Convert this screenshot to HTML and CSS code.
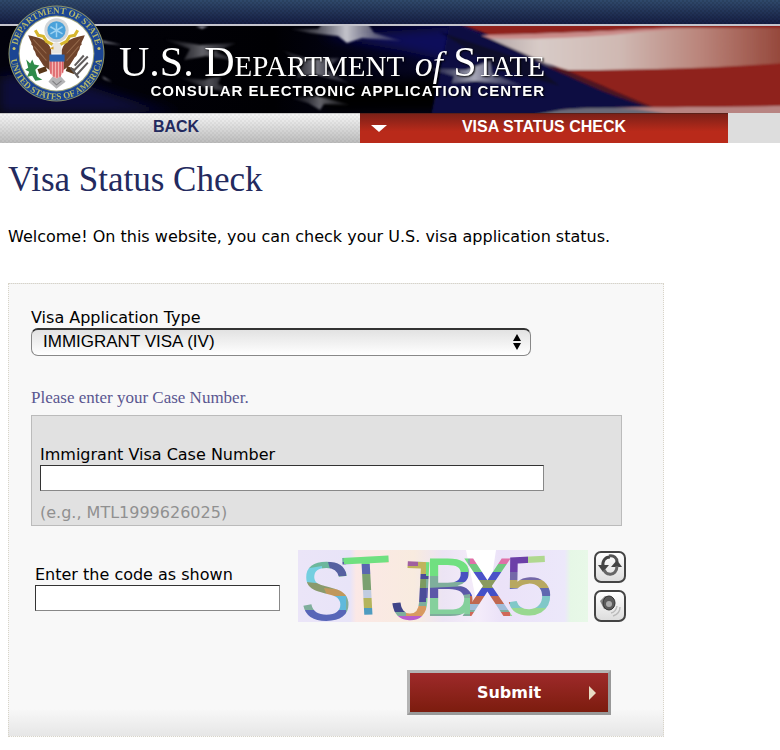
FILE: index.html
```html
<!DOCTYPE html>
<html lang="en">
<head>
  <meta charset="utf-8">
  <title>Visa Status Check</title>
  <link rel="stylesheet" href="styles.css">
</head>
<body>
  <header class="site-header">
    <div class="topbar"></div>
    <div class="banner">
      <svg class="flag" viewBox="0 0 780 87" preserveAspectRatio="xMinYMin slice" aria-hidden="true">
        <defs>
          <linearGradient id="field" x1="0" x2="1">
            <stop offset="0" stop-color="#02020c"/>
            <stop offset=".35" stop-color="#000003"/>
            <stop offset=".6" stop-color="#06062c"/>
            <stop offset="1" stop-color="#0a0d4c"/>
          </linearGradient>
          <linearGradient id="whiteStripe" x1="0" x2="1">
            <stop offset="0" stop-color="#a79a9c"/>
            <stop offset=".2" stop-color="#d8cbc7"/>
            <stop offset=".45" stop-color="#cfb8b2"/>
            <stop offset=".7" stop-color="#b98379"/>
            <stop offset="1" stop-color="#8d3a2d"/>
          </linearGradient>
          <linearGradient id="star" x1="0" x2="1">
            <stop offset="0" stop-color="#55555f" stop-opacity=".2"/>
            <stop offset=".5" stop-color="#c4c4cc"/>
            <stop offset="1" stop-color="#66667a" stop-opacity=".3"/>
          </linearGradient>
          <filter id="soft"><feGaussianBlur stdDeviation="1"/></filter>
          <filter id="softer"><feGaussianBlur stdDeviation="6"/></filter>
        </defs>
        <rect width="780" height="87" fill="url(#field)"/>
        <g filter="url(#softer)">
          <path d="M0 50C60 40 120 75 180 87H0z" fill="#08083a"/>
          <path d="M320 10L470 0L560 60L520 50L400 24z" fill="#10105a"/>
          <path d="M300 60L440 50L500 87H330z" fill="#000"/>
        </g>
        <g filter="url(#soft)">
          <path d="M456 -4H800V95H655C610 68 560 44 520 22C496 10 470 3 456 -4z" fill="#8f211b"/>
          <path d="M474 9C560 9 620 3 690 2H800V36C720 42 650 44 568 44C540 36 500 24 474 9z" fill="url(#whiteStripe)"/>
          <path d="M474 9C560 9 620 3 690 2L640 6C590 12 530 14 480 12z" fill="#c98a88"/>
          <path d="M474 8C505 18 530 30 556 42L540 48L500 34z" fill="#5d5268"/>
          <path d="M450 -4C490 12 520 26 546 40C590 58 620 72 658 84L600 95H430z" fill="#0a0c42"/>
          <path d="M440 6L530 36L560 60L500 44z" fill="#07072a"/>
          <path d="M546 40L566 44C600 58 630 72 658 83C620 74 590 60 546 40z" fill="#4d1420"/>
          <path d="M560 84C640 79 700 83 800 79V95H560z" fill="#b88482"/>
          <path d="M500 95L560 84C600 80 650 80 690 95z" fill="#6a6a78"/>
          <path d="M290 3L318 3L322 -2H368L374 7L402 15L362 12L347 17L338 10L310 7z" fill="url(#star)"/>
          <path d="M163 13L200 19L236 17L216 26L242 36L206 30L184 34L190 23z" fill="url(#star)" opacity=".5"/>
          <path d="M178 51L204 54L222 48L218 58L240 68L206 62z" fill="url(#star)" opacity=".4"/>
          <path d="M282 24L308 33L340 32L326 43L350 58L314 48L296 52L302 39z" fill="url(#star)" opacity=".6"/>
          <path d="M290 72L318 70L350 79L324 78L320 84L308 77z" fill="url(#star)" opacity=".5"/>
          <path d="M424 42L466 44L490 35L492 48L524 60L476 55L452 57L454 50z" fill="url(#star)" opacity=".85"/>
          <path d="M102 50L112 56L104 53z M100 14L122 19L104 17z M196 0h12l-6 3z" fill="#8a8a96"/>
        </g>
      </svg>
      <svg class="seal" viewBox="0 0 96 96" role="img" aria-label="Seal of the Department of State">
        <defs>
          <path id="ringTop" d="M8.500 48A39.500 39.500 0 0 1 87.500 48"/>
          <path id="ringBottom" d="M2.500 48A45.500 45.500 0 0 0 93.500 48"/>
        </defs>
        <circle cx="48" cy="48" r="47.500" fill="#8d9468"/>
        <circle cx="48" cy="48" r="46.500" fill="#1b4593"/>
        <circle cx="48" cy="48" r="37.500" fill="#9da37c"/>
        <circle cx="48" cy="48" r="36.500" fill="#fff"/>
        <text class="seal-text"><textPath href="#ringTop" startOffset="50%" text-anchor="middle">DEPARTMENT OF STATE</textPath></text>
        <text class="seal-text"><textPath href="#ringBottom" startOffset="50%" text-anchor="middle">UNITED STATES OF AMERICA</textPath></text>
        <circle cx="6" cy="43" r="1.500" fill="#c9c26a"/>
        <circle cx="90" cy="43" r="1.500" fill="#c9c26a"/>
        <circle cx="48" cy="25" r="12" fill="#d3d6d8"/>
        <circle cx="48" cy="25" r="9" fill="#4aa1da"/>
        <path d="M48 18v14M42 21.500l12 7M54 21.500l-12 7" stroke="#9cd2f2" stroke-width="1.500"/>
        <path d="M43 45C40 34 30 32 20 30C22 36 24 37 23 39C26 41 24 43 26 45C28 48 27 50 30 52L35 60L42 65z" fill="#6f432b"/>
        <path d="M53 45C56 34 66 32 76 30C74 36 72 37 73 39C70 41 72 43 70 45C68 48 69 50 66 52L61 60L54 65z" fill="#6f432b"/>
        <path d="M25 34L38 48M26 41L38 55M71 34L58 48M70 41L58 55" stroke="#94694b" stroke-width="1" fill="none"/>
        <path d="M27 25l3 5 5 1 3 5 6 3 3 4M69 25l-3 5-5 1-3 5-6 3-3 4" stroke="#d6b62e" stroke-width="3" fill="none"/>
        <path d="M43 48C42 39 45 36 49 37C54 38 53 43 53 48z" fill="#e9e6df"/>
        <path d="M45 41l-4 2 4 1z" fill="#d6a52e"/>
        <path d="M38 63l-8 3M58 63l8 3" stroke="#583719" stroke-width="5"/>
        <path d="M48 66l-8 10 8 7 9-7z" fill="#b4b4b6"/>
        <path d="M44 75l4 4 5-4" stroke="#7d7d80" fill="none"/>
        <path d="M41 55h14v10q-2 6-7 8q-5-2-7-8z" fill="#f4b6b4"/>
        <path d="M42.500 55v13M45.500 55v16M48.500 55v17M51.500 55v16M54 55v12" stroke="#da5c62" stroke-width="1.500"/>
        <path d="M41 49h15v7H41z" fill="#285fae"/>
        <path d="M18 54l4 4 2-4 2 5 5 1-4 4 2 7 5 3-7 1-3-5-5 1 2-5-4-2 3-2z" fill="#2f8b4a"/>
        <path d="M79 51L64 66M75 50L66 60M79 57L68 69M62 62l8 10" stroke="#605c5c" stroke-width="2"/>
      </svg>
      <div class="brand">
        <div class="brand-name">U.S. Department <i>of</i> State</div>
        <div class="brand-sub">CONSULAR ELECTRONIC APPLICATION CENTER</div>
      </div>
    </div>
    <nav class="nav">
      <a class="nav-back" href="#">BACK</a>
      <a class="nav-current" href="#">VISA STATUS CHECK</a>
    </nav>
  </header>

  <main class="content">
    <h1>Visa Status Check</h1>
    <p class="intro">Welcome! On this website, you can check your U.S. visa application status.</p>

    <form class="panel">
      <label for="visaType">Visa Application Type</label>
      <div class="select-wrap">
        <select id="visaType">
          <option>IMMIGRANT VISA (IV)</option>
        </select>
        <svg class="select-arrows" viewBox="0 0 8 16" aria-hidden="true">
          <path d="M4 0l4 7H0zM4 16l4-7H0z"/>
        </svg>
      </div>

      <p class="prompt">Please enter your Case Number.</p>
      <div class="case-box">
        <label for="caseNumber">Immigrant Visa Case Number</label>
        <input type="text" id="caseNumber">
        <span class="hint">(e.g., MTL1999626025)</span>
      </div>

      <div class="code-row">
        <div class="code-field">
          <label for="code">Enter the code as shown</label>
          <input type="text" id="code">
        </div>
        <svg class="code-image" viewBox="0 0 290 72" role="img" aria-label="Code">
          <defs>
            <linearGradient id="paper">
              <stop offset="0" stop-color="#ebe5f8"/>
              <stop offset=".18" stop-color="#e8e4f8"/>
              <stop offset=".2" stop-color="#fbe8e6"/>
              <stop offset=".4" stop-color="#f8ebdf"/>
              <stop offset=".5" stop-color="#ece4f4"/>
              <stop offset=".62" stop-color="#f4ecfa"/>
              <stop offset=".7" stop-color="#ebe2f8"/>
              <stop offset=".92" stop-color="#ece8fa"/>
              <stop offset=".94" stop-color="#e6f7e6"/>
              <stop offset="1" stop-color="#e8f8e8"/>
            </linearGradient>
            <pattern id="ink" width="290" height="80" patternUnits="userSpaceOnUse">
              <rect width="290" height="80" fill="#7fae9c"/>
              <!-- S -->
              <path d="M0 0h48v18L0 26z" fill="#6cb79c"/>
              <path d="M30 12h18v14H34z" fill="#5560a0"/>
              <path d="M0 20l24-4v18H0z" fill="#74cfe0"/>
              <path d="M8 32l40 4v12L8 40z" fill="#8a9a6c"/>
              <path d="M26 38l22 2v8H30z" fill="#c0985c"/>
              <path d="M36 46h12v16H30z" fill="#5fb9dc"/>
              <path d="M0 60h48v20H0z" fill="#5866b8"/>
              <!-- T -->
              <path d="M46 0h46v14H46z" fill="#70e080"/>
              <path d="M60 14h20v10H60z" fill="#5a66b0"/>
              <path d="M60 24h20v16H60z" fill="#7aa070"/>
              <path d="M60 40h20v8H60z" fill="#c0cce0"/>
              <path d="M60 48h20v10H60z" fill="#b4b45c"/>
              <path d="M60 58h20v14H60z" fill="#4f9cc0"/>
              <!-- J and B -->
              <path d="M88 12h52v12H88z" fill="#c0b45c"/>
              <path d="M100 10h20v6h-20z" fill="#a060a0"/>
              <path d="M88 28h40v10H88z" fill="#7c9a60"/>
              <path d="M112 24h20v5h-20zM116 38h20v14h-20z" fill="#4c4c98"/>
              <path d="M88 50h20v12H88z" fill="#404488"/>
              <path d="M108 56h24v10h-24z" fill="#d89a60"/>
              <path d="M88 66h80v14H88z" fill="#b85ccc"/>
              <path d="M128 8h42v18h-42z" fill="#70e080"/>
              <path d="M156 22h14v10h-14z" fill="#4852c0"/>
              <path d="M128 38l44-2v8l-44 6z" fill="#5c58a8"/>
              <path d="M128 48h44v16h-44z" fill="#84d09c"/>
              <!-- X -->
              <path d="M172 6h40v10h-40z" fill="#e070a8"/>
              <path d="M172 14h40v8h-40z" fill="#70c880"/>
              <path d="M172 22h40v8h-40z" fill="#4a52c8"/>
              <path d="M172 30h40v8h-40z" fill="#8a9a60"/>
              <path d="M172 38h40v8h-40z" fill="#4450c8"/>
              <path d="M172 46h40v8h-40z" fill="#c06850"/>
              <path d="M172 54h40v6h-40z" fill="#a0bcd8"/>
              <path d="M172 62h40v8h-40z" fill="#d06858"/>
              <!-- 5 -->
              <path d="M212 0h22v22h-22z" fill="#6c3fa8"/>
              <path d="M230 0h30v20h-30z" fill="#b0d890"/>
              <path d="M212 22h48v8h-48z" fill="#7468a8"/>
              <path d="M212 30h48v8h-48z" fill="#b8a860"/>
              <path d="M212 38h48v8h-48z" fill="#6068b0"/>
              <path d="M212 46h48v12h-48z" fill="#80c8c8"/>
              <path d="M212 58h48v14h-48z" fill="#98d890"/>
            </pattern>
          </defs>
          <rect width="290" height="72" fill="url(#paper)"/>
          <path d="M168 0h30l-6 40-14 10z" fill="#fff"/>
          <text class="code-glyphs" x="2 44 86 125 163 206" y="70 66 68 66 66 66" rotate="0 -3 3 0 0 -3">STJBX5</text>
        </svg>
        <div class="code-buttons">
          <button type="button" aria-label="New code">
            <svg viewBox="0 0 28 28" aria-hidden="true">
              <path d="M7 14C6 8 9 4 14 4" stroke="#444" stroke-width="3" fill="none"/>
              <path d="M2 12H13L7 19z" fill="#444"/>
              <path d="M13 3C18 2 21 5 21 9" stroke="#555" stroke-width="3" fill="none"/>
              <path d="M15 14H26L21 7z" fill="#444"/>
              <path d="M21 13C21 18 18 22 13 21C10 21 9 19 8 17" stroke="#666" stroke-width="3" fill="none"/>
            </svg>
          </button>
          <button type="button" aria-label="Play code">
            <svg viewBox="0 0 28 28" aria-hidden="true">
              <path d="M4 9L9 4L16 5L19 13L15 18L8 17z" fill="#888"/>
              <ellipse cx="13" cy="11" rx="6" ry="7" fill="#5a5a5a" stroke="#333"/>
              <circle cx="13" cy="12" r="3" fill="#aaa"/>
              <path d="M15 21q5-1 6-7M17 24q7-2 7-9" stroke="#bbb" stroke-width="1.500" fill="none"/>
            </svg>
          </button>
        </div>
      </div>

      <button type="submit" class="submit">Submit</button>
    </form>
  </main>
</body>
</html>
```
FILE: styles.css
```css
body {
  margin: 0;
  font-family: Verdana, "DejaVu Sans", sans-serif;
  font-size: 16px;
  line-height: 20px;
  color: #000;
  background: #fff;
}

.topbar {
  height: 24px;
  border-bottom: 2px solid #c4c4cc;
  background:
    conic-gradient(rgba(0, 0, 0, 0.1) 25%, transparent 0 50%, rgba(0, 0, 0, 0.1) 0 75%, transparent 0) 0 0 / 4px 4px,
    linear-gradient(#304a6c, #151e44);
}

.banner {
  position: relative;
  height: 87px;
  background: #8c1f1a;
}

.flag {
  position: absolute;
  top: 0;
  left: 0;
  width: 100%;
  height: 100%;
}

/* the seal hangs over the top bar */
.seal {
  position: absolute;
  top: -21px;
  left: 8px;
  width: 97px;
  height: 97px;
}

.seal-text {
  font-family: "Liberation Serif", "Times New Roman", serif;
  font-size: 9px;
  font-weight: bold;
  fill: #b4b768;
}

.brand {
  position: relative;
  display: inline-block;
  padding: 16px 0 0 119px;
  color: #fff;
  text-align: right;
  text-shadow: 1px 1px 2px #000;
}

.brand-name {
  font-family: "Liberation Serif", "Times New Roman", serif;
  font-size: 42px;
  font-variant: small-caps;
  line-height: 40px;
}

.brand-name i {
  font-size: 36px;
  font-variant: normal;
  line-height: 30px;
}

.brand-sub {
  font-family: "Liberation Sans", Arial, sans-serif;
  font-size: 15px;
  font-weight: bold;
  letter-spacing: 1px;
  line-height: 18px;
}

.nav {
  display: grid;
  grid-template-columns: 360fr 368fr 52fr;
  background: #ddd;
}

.nav a {
  height: 29px;
  font-family: "Liberation Sans", Arial, sans-serif;
  font-weight: bold;
  line-height: 25px;
  text-align: center;
  text-decoration: none;
}

.nav-back {
  padding-right: 8px;
  border-top: 1px solid #c8c8c8;
  color: #232a5e;
  background:
    conic-gradient(rgba(0, 0, 0, 0.04) 25%, transparent 0 50%, rgba(0, 0, 0, 0.04) 0 75%, transparent 0) 0 0 / 4px 4px,
    linear-gradient(#f6f6f6, #bcbcbc);
}

.nav-current {
  position: relative;
  border-top: 1px solid #5c2018;
  color: #fff;
  background: linear-gradient(#7c2018, #b92a1a 60%);
}

.nav-current::before {
  content: "";
  position: absolute;
  top: 11px;
  left: 11px;
  border: 8px solid transparent;
  border-top: 7px solid #fff;
  border-bottom: 0;
}

.content {
  padding: 14px 8px;
}

h1 {
  margin: 0;
  font-family: "Liberation Serif", "Times New Roman", serif;
  font-size: 35px;
  font-weight: normal;
  line-height: 46px;
  color: #232a5e;
}

.intro {
  margin: 24px 0 36px;
}

.panel {
  box-sizing: border-box;
  max-width: 656px;
  padding: 23px 22px 21px;
  border: 1px dotted #d8d4c8;
  background: linear-gradient(#f8f8f8 94%, #e6e6e6);
}

.panel label {
  display: block;
  line-height: 21px;
}

.select-wrap {
  position: relative;
  width: 82%;
}

select {
  display: block;
  box-sizing: border-box;
  width: 100%;
  height: 28px;
  padding: 0 11px 2px;
  appearance: none;
  border: 1px solid #888;
  border-top: 2px solid #333;
  border-radius: 7px;
  font-family: "Liberation Sans", Arial, sans-serif;
  font-size: 17px;
  color: #000;
  background: linear-gradient(#e2e2e2, #fff);
}

.select-arrows {
  position: absolute;
  top: 6px;
  right: 10px;
  width: 8px;
  height: 16px;
}

.prompt {
  margin: 32px 0 7px;
  font-family: "Liberation Serif", "Times New Roman", serif;
  font-size: 17px;
  color: #5a5690;
}

.case-box {
  margin-right: 19px;
  padding: 28px 8px 2px;
  border: 1px solid #bbb;
  background: #e1e1e1;
}

input[type="text"] {
  display: block;
  box-sizing: border-box;
  width: 100%;
  height: 26px;
  padding: 2px 4px;
  border: 1px solid #888;
  border-top-color: #333;
  border-left-color: #333;
  font-size: 16px;
  background: #fff;
}

.case-box input[type="text"] {
  width: 88%;
  margin-bottom: 12px;
}

.hint {
  color: #909090;
}

.code-row {
  display: flex;
  align-items: flex-start;
  margin: 24px 0 48px;
  padding-left: 4px;
}

.code-field {
  width: 245px;
  margin: 14px 18px 0 0;
}

.code-image {
  width: 290px;
  height: 72px;
  overflow: visible;
}

.code-glyphs {
  font-family: "Liberation Mono", "Courier New", monospace;
  font-size: 88px;
  fill: url(#ink);
}

.code-buttons {
  display: flex;
  flex-direction: column;
  gap: 7px;
  margin: 1px 0 0 6px;
}

.code-buttons button {
  width: 32px;
  height: 32px;
  padding: 0;
  border: 2px solid #444;
  border-radius: 7px;
  background: linear-gradient(#fff, #ddd);
}

.code-buttons svg {
  display: block;
  width: 28px;
  height: 28px;
}

.submit {
  position: relative;
  display: block;
  width: 204px;
  height: 45px;
  margin: 0 30px 0 auto;
  border: 3px solid #b4b4b4;
  border-right-color: #999;
  border-bottom-color: #999;
  font-family: Verdana, "DejaVu Sans", sans-serif;
  font-size: 16px;
  font-weight: bold;
  color: #fff;
  background: linear-gradient(#9e2a2a, #7c1c0e);
}

.submit::after {
  content: "";
  position: absolute;
  top: 13px;
  right: 12px;
  border: 7px solid transparent;
  border-left: 7px solid #e8dcc4;
  border-right: 0;
}
```
